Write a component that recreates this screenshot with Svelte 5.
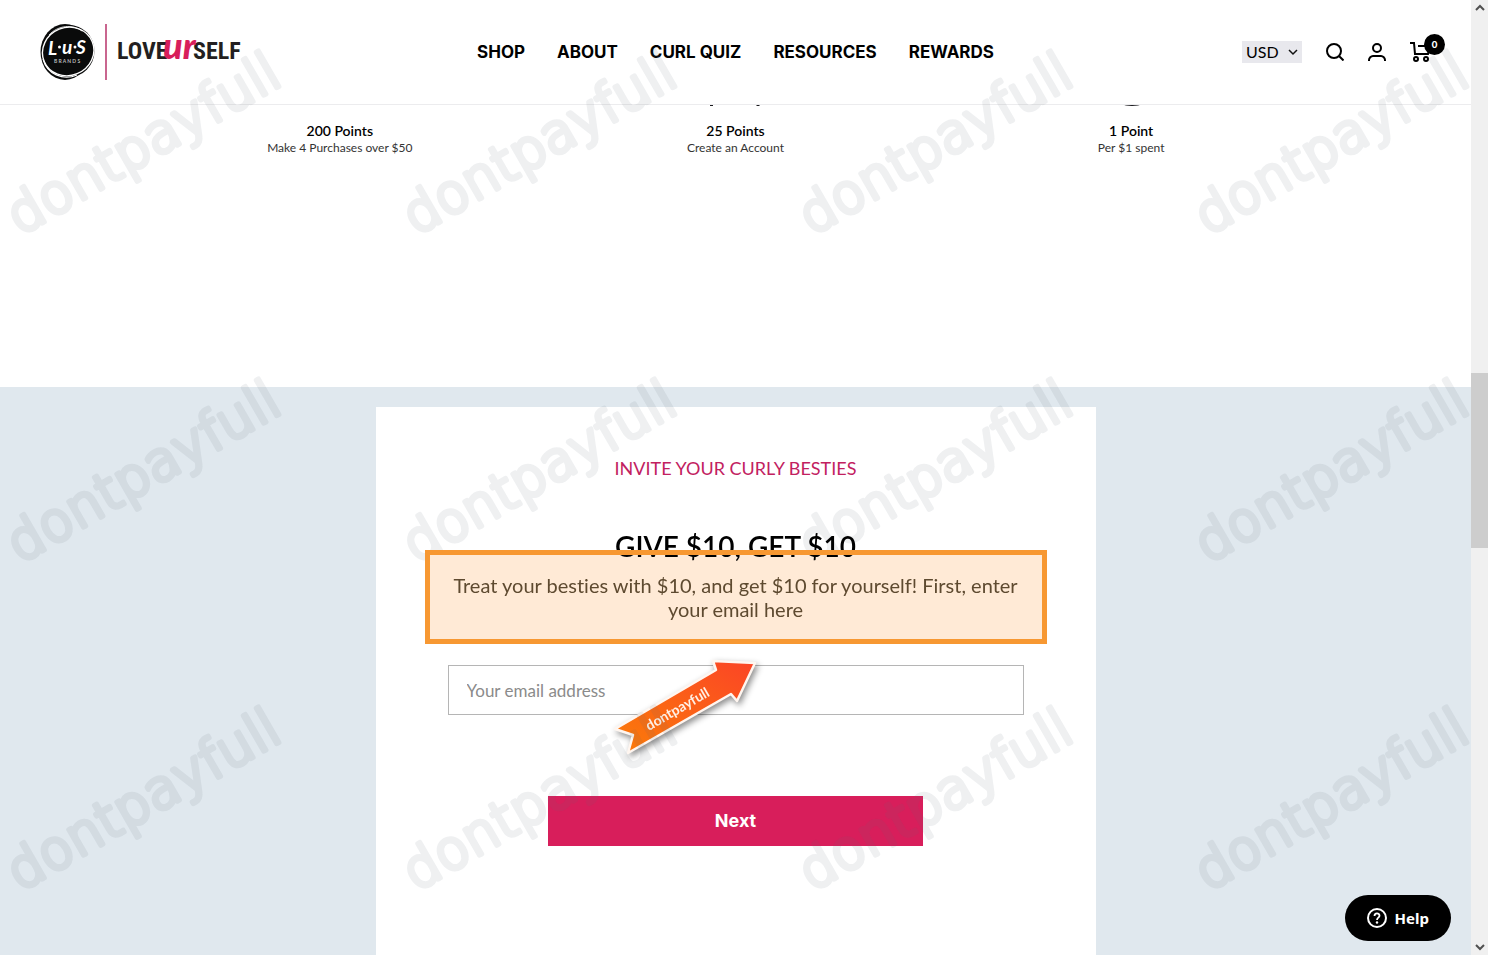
<script lang="ts">
	const navItems = ['Shop', 'About', 'Curl Quiz', 'Resources', 'Rewards'];

	const rewards = [
		{ icon: 'bag', points: '200 Points', label: 'Make 4 Purchases over $50' },
		{ icon: 'account', points: '25 Points', label: 'Create an Account' },
		{ icon: 'coin', points: '1 Point', label: 'Per $1 spent' }
	];

	const stamps = [0, 1, 2].flatMap((row) =>
		[0, 1, 2, 3].map((col) => ({ x: 20 + col * 396, y: 236 + row * 328 }))
	);

	let currency = $state('USD');
	let email = $state('');
	let cartCount = $state(0);
</script>

<div class="shell">
	<div class="page">
		<header class="header">
			<a class="logo" href="/" aria-label="LUS Brands, Love Ur Self">
				<svg width="202" height="58" viewBox="0 0 202 58">
					<ellipse cx="25" cy="29" rx="24.5" ry="28" fill="#0a0b0b" />
					<ellipse cx="29" cy="28" rx="25.500" ry="26" fill="#0a0b0b" />
					<ellipse cx="28" cy="28.500" rx="26" ry="24" fill="none" stroke="#fff" stroke-width="1.400" transform="rotate(-22 28 28)" />
					<path d="M3 36c4 15 20 22 34 16" fill="none" stroke="#fff" stroke-width="1.200" />
					<path d="M9 12C18 2 33 1 42 8" fill="none" stroke="#fff" stroke-width="0.800" />
					<g class="lus">
						<text x="8" y="32">L</text>
						<text x="22" y="31">u</text>
						<text x="36" y="31">S</text>
					</g>
					<circle cx="19.500" cy="24" r="1.500" fill="#fff" />
					<circle cx="35" cy="24" r="1.500" fill="#fff" />
					<text class="brands" x="14" y="40">B R A N D S</text>
					<path d="M66 1v56" stroke="#c9668f" stroke-width="2" />
					<text class="wordmark" x="77" y="36">LOVE</text>
					<text class="wordmark" x="153" y="36">SELF</text>
					<text class="ur" x="123" y="36">ur</text>
				</svg>
			</a>

			<nav class="nav">
				{#each navItems as item}
					<a href="/">{item}</a>
				{/each}
			</nav>

			<div class="tools">
				<div class="currency">
					<select bind:value={currency} aria-label="Currency">
						<option>USD</option>
						<option>CAD</option>
					</select>
					<svg width="10" height="8" viewBox="0 0 10 8" fill="none" stroke="#111" stroke-width="1.5">
						<path d="M1 2l4 4 4-4" />
					</svg>
				</div>
				<button class="icon-btn" aria-label="Search">
					<svg width="18" height="18" viewBox="0 0 18 18" fill="none" stroke="#000" stroke-width="2">
						<circle cx="8" cy="8" r="7" />
						<path d="M13 13l4.500 4.500" />
					</svg>
				</button>
				<button class="icon-btn" aria-label="Account">
					<svg width="18" height="18" viewBox="0 0 18 18" fill="none" stroke="#000" stroke-width="2">
						<circle cx="9" cy="5" r="4" />
						<path d="M1 18v-1c0-2 2-4 4-4h8c2 0 4 2 4 4v1" />
					</svg>
				</button>
				<button class="icon-btn cart" aria-label="Cart">
					<svg width="21" height="20" viewBox="0 0 21 20" fill="none" stroke="#000" stroke-width="2">
						<path d="M0 1h4l1 11h13l2-8H8" />
						<circle cx="6" cy="17" r="2" />
						<circle cx="16" cy="17" r="2" />
					</svg>
					<span class="badge">{cartCount}</span>
				</button>
			</div>
		</header>

		<section class="rewards">
			{#each rewards as reward}
				<div class="reward">
					<svg class="reward-icon" width="64" height="60" viewBox="0 0 64 60" fill="none" stroke="#1b1b1f" stroke-width="3">
						{#if reward.icon === 'bag'}
							<path d="M14 20h36v32H14zM24 20v-8h16v8" />
						{:else if reward.icon === 'account'}
							<circle cx="32" cy="18" r="12" />
							<path d="M8.500 60V48c0-8 8-12 23.500-12s23 4 23 12v12" />
						{:else}
							<circle cx="33" cy="30" r="28.500" />
						{/if}
					</svg>
					<h3>{reward.points}</h3>
					<p>{reward.label}</p>
				</div>
			{/each}
		</section>

		<section class="referral">
			<form class="card" onsubmit={(e) => e.preventDefault()}>
				<p class="eyebrow">INVITE YOUR CURLY BESTIES</p>
				<h2>GIVE $10, GET $10</h2>
				<div class="highlight">
					<p>Treat your besties with $10, and get $10 for yourself! First, enter your email here</p>
				</div>
				<div class="field">
					<input type="email" bind:value={email} placeholder="Your email address" aria-label="Your email address" />
					<svg class="arrow" width="164" height="124" viewBox="0 0 164 124">
						<defs>
							<linearGradient id="arrow-fill" x1="0" y1="1" x2="1" y2="0">
								<stop offset="0" stop-color="#fb7d08" />
								<stop offset="1" stop-color="#fb4426" />
							</linearGradient>
						</defs>
						<path
							d="M7 77L108 18l-3-9 42 2-18 38-6-7L20 101l5-18z"
							fill="url(#arrow-fill)"
							stroke="#fff6f0"
							stroke-width="2.500"
							stroke-linejoin="round"
						/>
						<text x="41" y="79" transform="rotate(-30 41 79)">dontpayfull</text>
					</svg>
				</div>
				<button class="next" type="submit">Next</button>
			</form>
		</section>
	</div>

	<div class="scrollbar" aria-hidden="true">
		<svg width="17" height="17" viewBox="0 0 17 17" fill="none" stroke="#505050" stroke-width="2">
			<path d="M5 10l4-4 4 4" />
		</svg>
		<div class="track"><div class="thumb"></div></div>
		<svg width="17" height="17" viewBox="0 0 17 17" fill="none" stroke="#505050" stroke-width="2">
			<path d="M5 7l4 4 4-4" />
		</svg>
	</div>

	<svg class="watermark" aria-hidden="true">
		{#each stamps as stamp}
			<text transform="translate({stamp.x} {stamp.y}) rotate(-30)">dontpayfull</text>
		{/each}
	</svg>

	<button class="help">
		<svg width="20" height="20" viewBox="0 0 20 20" fill="none" stroke="#fff" stroke-width="2">
			<circle cx="10" cy="10" r="9" />
			<path d="M7.500 8c0-3.500 5-3.300 5-.3 0 2-2.500 2-2.500 4.300" stroke-width="1.800" />
			<circle cx="10" cy="14.500" r="1.200" fill="#fff" stroke="none" />
		</svg>
		Help
	</button>
</div>

<style>
	:global(body) {
		margin: 0;
		background: #fff;
		font-family: Lato, 'Liberation Sans', sans-serif;
		font-variant-ligatures: none;
		color: #000;
	}

	* {
		box-sizing: border-box;
	}

	h2,
	h3,
	p {
		margin: 0;
	}

	button {
		border: 0;
		padding: 0;
		cursor: pointer;
	}

	.shell {
		display: flex;
		height: 100vh;
		overflow: hidden;
	}

	.page {
		flex: 1;
		display: flex;
		flex-direction: column;
		min-width: 0;
	}

	.header {
		display: grid;
		grid-template-columns: 1fr auto 1fr;
		align-items: center;
		flex-shrink: 0;
		padding: 23px 40px;
		background: #fff;
		border-bottom: 1px solid #ececee;
		z-index: 2;
	}

	.logo,
	.logo svg {
		display: block;
	}

	.lus text {
		font: italic 700 19px Lato, sans-serif;
		fill: #fff;
	}

	.brands {
		font: 700 5px Lato, sans-serif;
		fill: #bbb;
	}

	.wordmark {
		font: 700 24px 'Liberation Sans Narrow', 'Roboto Condensed', sans-serif;
		fill: #231f20;
	}

	.ur {
		font: italic 900 36px Lato, sans-serif;
		fill: #d81e5b;
	}

	.nav {
		display: flex;
		gap: 32px;
	}

	.nav a {
		font: 700 17px/24px Inter, sans-serif;
		color: #000;
		text-decoration: none;
		text-transform: uppercase;
	}

	.tools {
		display: flex;
		align-items: center;
		justify-content: flex-end;
		gap: 24px;
	}

	.currency {
		position: relative;
	}

	.currency select {
		display: block;
		appearance: none;
		width: 60px;
		height: 22px;
		padding: 0 4px;
		border: 0;
		border-radius: 0;
		background: #e8e8ed;
		font: 16px/22px Lato, sans-serif;
		color: #000;
	}

	.currency svg {
		position: absolute;
		top: 7px;
		right: 4px;
		pointer-events: none;
	}

	.icon-btn {
		background: none;
	}

	.icon-btn svg {
		display: block;
	}

	.cart {
		position: relative;
	}

	.badge {
		position: absolute;
		top: -8px;
		right: -14px;
		width: 21px;
		height: 21px;
		border-radius: 50%;
		background: #000;
		color: #fff;
		font: 700 9px/21px Inter, sans-serif;
		text-align: center;
	}

	.rewards {
		display: grid;
		grid-template-columns: repeat(3, 1fr);
		width: 100%;
		max-width: 1187px;
		margin: -59px auto 0;
		padding-bottom: 231px;
	}

	.reward {
		display: flex;
		flex-direction: column;
		align-items: center;
		text-align: center;
	}

	.reward h3 {
		margin-top: 16px;
		font-size: 14px;
		line-height: 18px;
		font-weight: 600;
	}

	.reward p {
		font-size: 12px;
		line-height: 16px;
		color: #333;
	}

	.referral {
		flex: 1 0 auto;
		padding: 20px 24px 0;
		background: #e0e8ee;
	}

	.card {
		display: flex;
		flex-direction: column;
		align-items: center;
		max-width: 720px;
		min-height: 100%;
		margin: 0 auto;
		padding: 49px;
		background: #fff;
		text-align: center;
	}

	.eyebrow {
		font-size: 18px;
		line-height: 24px;
		color: #c2215f;
	}

	h2 {
		position: relative;
		z-index: 7;
		margin-top: 48px;
		font-size: 28px;
		line-height: 36px;
		font-weight: 600;
	}

	.highlight {
		position: relative;
		width: 100%;
		margin-top: -14px;
		padding: 23px 20px;
		color: #5e4a30;
		font-size: 20px;
		line-height: 24px;
	}

	.highlight p {
		position: relative;
		z-index: 7;
	}

	.highlight::before,
	.highlight::after {
		content: '';
		position: absolute;
		inset: 0;
	}

	/* the heading runs over the tint but under the frame */
	.highlight::before {
		z-index: 6;
		background: #ffead6;
	}

	.highlight::after {
		z-index: 8;
		border: 5px solid #f79832;
	}

	.field {
		position: relative;
		width: 100%;
		max-width: 576px;
		margin-top: 21px;
	}

	.field input {
		display: block;
		width: 100%;
		height: 50px;
		padding: 0 18px;
		border: 1px solid #b5b5b5;
		border-radius: 0;
		background: #fff;
		font: 17px/24px Lato, sans-serif;
	}

	.field input::placeholder {
		color: #8b8b8b;
	}

	.arrow {
		position: absolute;
		left: 160px;
		top: -13px;
		filter: drop-shadow(2px 3px 3px rgba(0, 0, 0, 0.45));
		pointer-events: none;
	}

	.arrow text {
		font: 700 14px Lato, sans-serif;
		fill: #fff0e6;
	}

	.next {
		width: 375px;
		max-width: 100%;
		height: 50px;
		margin-top: 81px;
		background: #d81e5b;
		color: #fff;
		font: 700 18px/24px Inter, sans-serif;
	}

	.scrollbar {
		display: flex;
		flex-direction: column;
		width: 17px;
		background: #f0f0f0;
	}

	.scrollbar svg {
		display: block;
	}

	.track {
		flex: 1;
	}

	.thumb {
		height: 19%;
		margin-top: 356px;
		background: #cdcdcd;
	}

	.watermark {
		position: fixed;
		inset: 0;
		width: 100%;
		height: 100%;
		z-index: 5;
		opacity: 0.1;
		pointer-events: none;
	}

	.watermark text {
		font: 200 54px 'DejaVu Sans Light', 'DejaVu Sans', sans-serif;
		fill: #5f6d7b;
		stroke: #5f6d7b;
		stroke-width: 5px;
		stroke-linejoin: round;
	}

	.help {
		position: fixed;
		right: 37px;
		bottom: 14px;
		z-index: 8;
		display: flex;
		align-items: center;
		gap: 8px;
		height: 46px;
		padding: 0 22px;
		border-radius: 23px;
		background: #000;
		color: #fff;
		font: 700 15px/20px 'Noto Sans', sans-serif;
	}
</style>
